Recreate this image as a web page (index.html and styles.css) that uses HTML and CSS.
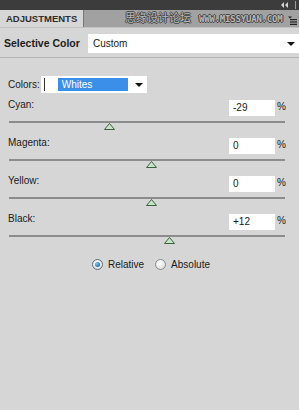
FILE: index.html
```html
<!DOCTYPE html>
<html>
<head>
<meta charset="utf-8">
<link rel="stylesheet" href="styles.css">
</head>
<body>
<div class="panel">
  <div class="topbar">
    <svg class="collapse" width="8" height="6" viewBox="0 0 8 6">
      <path d="M3 0v6L0 3z M7 0v6L4 3z" fill="#d4d4d4"/>
    </svg>
    <span class="bar-sep"></span>
  </div>
  <div class="tabs">
    <div class="tab">ADJUSTMENTS</div>
    <div class="tab-rest">
      <svg class="menu" width="9" height="9" viewBox="0 0 9 9">
        <path d="M0 0.5h4l-2 2z" fill="#222"/>
        <rect x="2" y="3" width="7" height="1.2" fill="#222"/>
        <rect x="2" y="5.4" width="7" height="1.2" fill="#222"/>
        <rect x="2" y="7.8" width="7" height="1.2" fill="#222"/>
      </svg>
    </div>
    <div class="watermark">思缘设计论坛<span class="wm-url">WWW.MISSYUAN.COM</span></div>
  </div>
  <div class="header">
    <div class="title">Selective Color</div>
    <div class="select wide">
      <span class="sel-text">Custom</span>
      <span class="arrow"></span>
    </div>
  </div>
  <div class="content">
    <div class="colors-row">
      <span class="label">Colors:</span>
      <div class="select small">
        <span class="caret"></span>
        <span class="hilite">Whites</span>
        <span class="arrow"></span>
      </div>
    </div>

    <div class="slider-group">
      <div class="slider-head">
        <span class="label">Cyan:</span>
        <span class="input">-29</span><span class="pct">%</span>
      </div>
      <div class="track"><svg class="thumb" style="left:36.5%" width="11" height="7" viewBox="0 0 11 7"><path d="M5.5 0.5L10.5 6.5H0.5z" fill="#c6e4c6" stroke="#3f5f3f" stroke-width="1"/></svg></div>
    </div>
    <div class="slider-group">
      <div class="slider-head">
        <span class="label">Magenta:</span>
        <span class="input">0</span><span class="pct">%</span>
      </div>
      <div class="track"><svg class="thumb" style="left:51.6%" width="11" height="7" viewBox="0 0 11 7"><path d="M5.5 0.5L10.5 6.5H0.5z" fill="#c6e4c6" stroke="#3f5f3f" stroke-width="1"/></svg></div>
    </div>
    <div class="slider-group">
      <div class="slider-head">
        <span class="label">Yellow:</span>
        <span class="input">0</span><span class="pct">%</span>
      </div>
      <div class="track"><svg class="thumb" style="left:51.6%" width="11" height="7" viewBox="0 0 11 7"><path d="M5.5 0.5L10.5 6.5H0.5z" fill="#c6e4c6" stroke="#3f5f3f" stroke-width="1"/></svg></div>
    </div>
    <div class="slider-group">
      <div class="slider-head">
        <span class="label">Black:</span>
        <span class="input">+12</span><span class="pct">%</span>
      </div>
      <div class="track"><svg class="thumb" style="left:58%" width="11" height="7" viewBox="0 0 11 7"><path d="M5.5 0.5L10.5 6.5H0.5z" fill="#c6e4c6" stroke="#3f5f3f" stroke-width="1"/></svg></div>
    </div>

    <div class="radios">
      <label class="radio"><span class="dot on"></span>Relative</label>
      <label class="radio"><span class="dot"></span>Absolute</label>
    </div>
  </div>
</div>
</body>
</html>
```
FILE: styles.css
```css
html, body {
  margin: 0;
  padding: 0;
  background: #d6d6d6;
}
body {
  font-family: "Liberation Sans", Arial, sans-serif;
  font-size: 10px;
  color: #1a1a1a;
}
.panel {
  width: 299px;
  height: 410px;
  background: #d6d6d6;
  overflow: hidden;
}
.topbar {
  height: 10px;
  background: #3c3c3c;
  display: flex;
  justify-content: flex-end;
  align-items: center;
  gap: 6px;
  padding-right: 3px;
}
.collapse {
  display: block;
}
.bar-sep {
  width: 1px;
  height: 8px;
  background: #9a9a9a;
}
.tabs {
  position: relative;
  height: 17px;
  display: flex;
  background: #a1a1a1;
  border-bottom: 1px solid #c2c2c2;
}
.tab {
  width: 84px;
  background: #d6d6d6;
  border-right: 1px solid #777;
  font-weight: bold;
  font-size: 9.5px;
  color: #2e2e2e;
  display: flex;
  align-items: center;
  padding-left: 6px;
  box-sizing: border-box;
}
.tab-rest {
  flex: 1;
  display: flex;
  justify-content: flex-end;
  align-items: center;
  padding-right: 2px;
  padding-top: 3px;
}
.watermark {
  position: absolute;
  left: 125px;
  top: -3px;
  font-family: "Noto Sans CJK SC", sans-serif;
  font-size: 11px;
  color: #b8b8b8;
  text-shadow: 1px 0 0 #444, -1px 0 0 #444, 0 1px 0 #444, 0 -1px 0 #444;
  white-space: nowrap;
  line-height: 20px;
}
.wm-url {
  margin-left: 8px;
  font-family: "DejaVu Sans Mono", monospace;
  font-size: 9px;
  letter-spacing: -0.2px;
  font-weight: bold;
}
.header {
  height: 29px;
  display: flex;
  align-items: center;
  border-bottom: 1px solid #b4b4b4;
}
.title {
  width: 84px;
  padding-left: 4px;
  font-weight: bold;
  font-size: 10.5px;
  color: #1c1c1c;
}
.select {
  background: #fff;
  display: flex;
  align-items: center;
  position: relative;
}
.select.wide {
  flex: 1;
  height: 19px;
  margin-top: 2px;
}
.sel-text {
  padding-left: 5px;
  font-size: 10px;
}
.arrow {
  position: absolute;
  right: 4px;
  top: 50%;
  margin-top: -2px;
  width: 0;
  height: 0;
  border-left: 4px solid transparent;
  border-right: 4px solid transparent;
  border-top: 4px solid #111;
}
.content {
  display: flex;
  flex-direction: column;
  padding: 18px 13px 0 8px;
}
.colors-row {
  display: flex;
  align-items: center;
  height: 17px;
  margin-bottom: 7px;
}
.select.small {
  width: 106px;
  height: 17px;
  margin-left: 1px;
}
.caret {
  width: 1px;
  height: 13px;
  background: #333;
  margin-left: 3px;
}
.hilite {
  margin-left: 13px;
  width: 66px;
  height: 13px;
  background: #3b8fe8;
  color: #fff;
  padding-left: 4px;
  line-height: 13px;
}
.slider-head {
  display: flex;
  align-items: flex-start;
  height: 16px;
}
.slider-head .label {
  flex: 1;
  line-height: 10px;
}
.input {
  width: 42px;
  height: 16px;
  background: #fff;
  padding-left: 4px;
  line-height: 16px;
  font-size: 10px;
}
.pct {
  width: 11px;
  text-align: right;
  font-size: 10px;
  line-height: 14px;
}
.track {
  position: relative;
  height: 2px;
  background: #8c8c8c;
  margin: 5px 1px 15px 1px;
}
.thumb {
  position: absolute;
  top: 2px;
  margin-left: -5.5px;
  display: block;
}
.radios {
  display: flex;
  justify-content: center;
  gap: 11px;
  margin-top: 6px;
  height: 12px;
  padding-left: 8px;
}
.radio {
  display: flex;
  align-items: center;
  gap: 5px;
  font-size: 10px;
}
.dot {
  width: 11px;
  height: 11px;
  border-radius: 50%;
  border: 1px solid #8a8a8a;
  background: radial-gradient(circle at 40% 35%, #fff, #d4d4d4);
  box-sizing: border-box;
  position: relative;
}
.dot.on {
  border-color: #5a6f80;
}
.dot.on::after {
  content: "";
  position: absolute;
  left: 2px;
  top: 2px;
  width: 5px;
  height: 5px;
  border-radius: 50%;
  background: radial-gradient(circle at 35% 35%, #7fc8f0, #0a4f8a);
}
```
